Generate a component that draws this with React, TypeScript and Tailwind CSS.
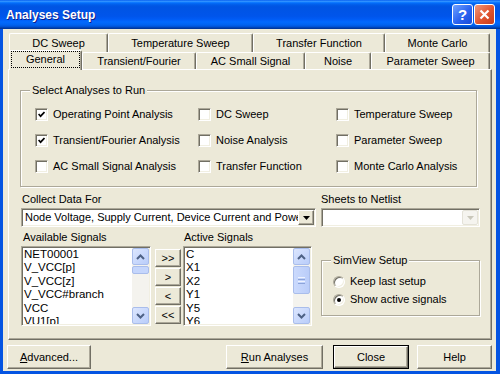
import React from 'react';

const raised =
  'border border-t-white border-l-white border-r-[#716F64] border-b-[#716F64] shadow-[inset_-1px_-1px_0_#ACA899]';
const sunken =
  'border border-t-[#ACA899] border-l-[#ACA899] border-r-white border-b-white shadow-[inset_1px_1px_0_#716F64,inset_-1px_-1px_0_#F1EFE2]';
const etched = 'border border-[#ACA899] shadow-[inset_1px_1px_0_#FFFFFF,1px_1px_0_#FFFFFF]';

function Check({ on }: { on?: boolean }) {
  return (
    <span className={`w-[13px] h-[13px] shrink-0 bg-white flex items-center justify-center ${sunken}`}>
      {on && (
        <svg width="7" height="7" viewBox="0 0 7 7">
          <path d="M0.6 3 L2.6 5.2 L6.5 1" fill="none" stroke="#000" strokeWidth="1.7" />
        </svg>
      )}
    </span>
  );
}

function Radio({ on }: { on?: boolean }) {
  return (
    <span className="w-[12px] h-[12px] shrink-0 rounded-full bg-white flex items-center justify-center border border-t-[#ACA899] border-l-[#ACA899] border-r-white border-b-white shadow-[inset_1px_1px_0_#716F64,inset_-1px_-1px_0_#F1EFE2]">
      {on && <span className="w-[4px] h-[4px] rounded-full bg-black" />}
    </span>
  );
}

function Tab({ label, className }: { label: string; className: string }) {
  return (
    <div
      className={`flex items-center justify-center bg-[#ECE9D8] border-t border-l border-t-white border-l-white border-r border-r-[#716F64] shadow-[inset_-1px_0_0_#ACA899] rounded-t-[2px] ${className}`}
    >
      {label}
    </div>
  );
}

function Arrow({ up }: { up?: boolean }) {
  return (
    <div className="w-[17px] h-[17px] shrink-0 rounded-[2px] border border-[#A9BDEB] bg-[linear-gradient(135deg,#DCE6FE,#B9CDFA)] flex items-center justify-center">
      <svg width="9" height="6" viewBox="0 0 9 6">
        <path
          d={up ? 'M1 5 L4.5 1.5 L8 5' : 'M1 1 L4.5 4.5 L8 1'}
          fill="none"
          stroke="#4D6185"
          strokeWidth="2"
        />
      </svg>
    </div>
  );
}

function ScrollBar({ thumb }: { thumb: 'small' | 'large' }) {
  return (
    <div className="w-[17px] h-full shrink-0 flex flex-col bg-[#F4F3EE]">
      <Arrow up />
      {thumb === 'small' ? (
        <div className="mt-[1px] h-[8px] rounded-[2px] border border-[#A9BDEB] bg-[#C5D6FC]" />
      ) : (
        <div className="mt-[1px] h-[28px] rounded-[2px] border border-[#A9BDEB] bg-[linear-gradient(90deg,#CBDAFD,#BACDF9)] flex flex-col items-center justify-center gap-[1px]">
          <span className="w-[7px] h-[1px] bg-[#EEF3FE]" />
          <span className="w-[7px] h-[1px] bg-[#8CA4DA]" />
          <span className="w-[7px] h-[1px] bg-[#EEF3FE]" />
          <span className="w-[7px] h-[1px] bg-[#8CA4DA]" />
        </div>
      )}
      <div className="flex-1" />
      <Arrow />
    </div>
  );
}

function ListBox({ items, className, thumb }: { items: string[]; className: string; thumb: 'small' | 'large' }) {
  return (
    <div className={`h-[80px] bg-white p-[1px] flex ${sunken} ${className}`}>
      <div className="flex-1 overflow-hidden pl-[1px] text-[11.5px] leading-[13.4px]">
        {items.map(it => (
          <div key={it} className="whitespace-nowrap">
            {it}
          </div>
        ))}
      </div>
      <ScrollBar thumb={thumb} />
    </div>
  );
}

function MoveButton({ label }: { label: string }) {
  return (
    <div className={`h-[18px] w-[26px] flex items-center justify-center bg-[#ECE9D8] ${raised}`}>{label}</div>
  );
}

export default function App() {
  return (
    <div className="w-[500px] h-[374px] flex flex-col bg-[#0454E2] font-['Liberation_Sans',Arial,sans-serif] text-[11px] text-black select-none overflow-hidden">
      {/* title bar */}
      <div className="h-[29px] shrink-0 flex items-center pl-[6px] pr-[5px] bg-[linear-gradient(180deg,#0058EE_0%,#3593FF_4%,#288EFF_6%,#127DFF_8%,#036FFC_10%,#0262EE_14%,#0057E5_20%,#0054E3_24%,#0055EB_56%,#005BF5_66%,#026AFE_76%,#0062EF_86%,#0052D6_92%,#0040AB_96%,#003092_100%)]">
        <span className="text-white font-bold text-[12px] [text-shadow:1px_1px_0_#0F1E8A]">Analyses Setup</span>
        <div className="ml-auto flex gap-[1px] mb-[1px]">
          <div className="w-[21px] h-[21px] rounded-[3px] border border-white bg-[linear-gradient(135deg,#6FA2FF,#2A63F0_55%,#1A4BD8)] flex items-center justify-center text-white font-bold text-[15px] leading-none">
            ?
          </div>
          <div className="w-[21px] h-[21px] rounded-[3px] border border-white bg-[linear-gradient(135deg,#F0987A,#E0542E_55%,#C83C1C)] flex items-center justify-center">
            <svg width="11" height="11" viewBox="0 0 11 11">
              <path d="M1.5 1.5 L9.5 9.5 M9.5 1.5 L1.5 9.5" stroke="#fff" strokeWidth="2.2" />
            </svg>
          </div>
        </div>
      </div>

      {/* client area */}
      <div className="flex-1 ml-[3px] mr-[4px] mb-[3px] bg-[#ECE9D8] flex flex-col pt-[4px]">
        {/* tabs back row */}
        <div className="flex ml-[6px] h-[19px]">
          <Tab label="DC Sweep" className="w-[99px]" />
          <Tab label="Temperature Sweep" className="w-[145px]" />
          <Tab label="Transfer Function" className="w-[132px]" />
          <Tab label="Monte Carlo" className="w-[105px]" />
        </div>
        {/* tabs front row */}
        <div className="flex items-end ml-[6px] h-[17px]">
          <div className="relative z-10 -mb-[1px] w-[73px] h-[20px] bg-[#ECE9D8] border-t border-l border-t-white border-l-white border-r border-r-[#716F64] shadow-[inset_-1px_0_0_#ACA899] rounded-t-[2px] flex flex-col px-[1px]">
            <div className="h-[17px] border border-dotted border-black flex items-center justify-center">General</div>
          </div>
          <Tab label="Transient/Fourier" className="w-[114px] h-[17px]" />
          <Tab label="AC Small Signal" className="w-[109px] h-[17px]" />
          <Tab label="Noise" className="w-[66px] h-[17px]" />
          <Tab label="Parameter Sweep" className="w-[119px] h-[17px]" />
        </div>

        {/* tab panel */}
        <div className="ml-[5px] w-[484px] h-[271px] shrink-0 flex flex-col border border-t-white border-l-white border-r-[#716F64] border-b-[#716F64] shadow-[inset_-1px_-1px_0_#ACA899]">
          {/* Select Analyses to Run */}
          <div className={`relative ml-[11px] mt-[20px] w-[457px] h-[97px] shrink-0 ${etched}`}>
            <span className="absolute left-[9px] -top-[7px] px-[2px] bg-[#ECE9D8] leading-[13px]">
              Select Analyses to Run
            </span>
            <div className="grid grid-cols-[163px_138px_1fr] gap-y-[13px] pt-[17px] pl-[14px]">
              <label className="flex items-center h-[13px] gap-[5px]">
                <Check on />
                Operating Point Analysis
              </label>
              <label className="flex items-center h-[13px] gap-[5px]">
                <Check />
                DC Sweep
              </label>
              <label className="flex items-center h-[13px] gap-[5px]">
                <Check />
                Temperature Sweep
              </label>
              <label className="flex items-center h-[13px] gap-[5px]">
                <Check on />
                Transient/Fourier Analysis
              </label>
              <label className="flex items-center h-[13px] gap-[5px]">
                <Check />
                Noise Analysis
              </label>
              <label className="flex items-center h-[13px] gap-[5px]">
                <Check />
                Parameter Sweep
              </label>
              <label className="flex items-center h-[13px] gap-[5px]">
                <Check />
                AC Small Signal Analysis
              </label>
              <label className="flex items-center h-[13px] gap-[5px]">
                <Check />
                Transfer Function
              </label>
              <label className="flex items-center h-[13px] gap-[5px]">
                <Check />
                Monte Carlo Analysis
              </label>
            </div>
          </div>

          {/* Collect data / sheets */}
          <div className="flex mt-[6px] ml-[12px]">
            <div className="w-[295px] flex flex-col">
              <span className="leading-[13px] pl-[1px]">Collect Data For</span>
              <div className={`mt-[2px] h-[19px] bg-white p-[1px] flex ${sunken}`}>
                <div className="flex-1 overflow-hidden whitespace-nowrap pl-[2px] leading-[15px]">
                  Node Voltage, Supply Current, Device Current and Power
                </div>
                <div className={`w-[16px] h-[15px] bg-[#ECE9D8] flex items-center justify-center ${raised}`}>
                  <svg width="7" height="4" viewBox="0 0 7 4">
                    <path d="M0 0 H7 L3.5 4 Z" fill="#000" />
                  </svg>
                </div>
              </div>
            </div>
            <div className="ml-[5px] w-[159px] flex flex-col">
              <span className="leading-[13px]">Sheets to Netlist</span>
              <div className={`mt-[2px] h-[19px] bg-white p-[1px] flex ${sunken}`}>
                <div className="flex-1" />
                <div className="w-[16px] h-[15px] rounded-[2px] border border-[#E4E2D8] bg-[#F5F4EF] flex items-center justify-center">
                  <svg width="7" height="4" viewBox="0 0 7 4">
                    <path d="M0 0 H7 L3.5 4 Z" fill="#C9C7BA" />
                  </svg>
                </div>
              </div>
            </div>
          </div>

          {/* signals */}
          <div className="flex mt-[4px] ml-[12px]">
            <div className="w-[130px] flex flex-col">
              <span className="leading-[13px] pl-[2px]">Available Signals</span>
              <ListBox
                className="mt-[2px] w-[130px]"
                thumb="small"
                items={['NET00001', 'V_VCC[p]', 'V_VCC[z]', 'V_VCC#branch', 'VCC', 'VU1[p]']}
              />
            </div>
            <div className="ml-[4px] w-[26px] pt-[18px] flex flex-col gap-[1px]">
              <MoveButton label=">>" />
              <MoveButton label=">" />
              <MoveButton label="<" />
              <MoveButton label="<<" />
            </div>
            <div className="ml-[2px] w-[129px] flex flex-col">
              <span className="leading-[13px] pl-[1px]">Active Signals</span>
              <ListBox
                className="mt-[2px] w-[129px]"
                thumb="large"
                items={['C', 'X1', 'X2', 'Y1', 'Y5', 'Y6']}
              />
            </div>
            <div className="ml-[9px] w-[159px] pt-[29px]">
              <div className={`relative h-[56px] ${etched}`}>
                <span className="absolute left-[9px] -top-[7px] px-[2px] bg-[#ECE9D8] leading-[13px]">
                  SimView Setup
                </span>
                <div className="flex flex-col gap-[5px] pt-[14px] pl-[11px]">
                  <label className="flex items-center h-[13px] gap-[5px]">
                    <Radio />
                    Keep last setup
                  </label>
                  <label className="flex items-center h-[13px] gap-[5px]">
                    <Radio on />
                    Show active signals
                  </label>
                </div>
              </div>
            </div>
          </div>
        </div>

        {/* bottom buttons */}
        <div className="flex mt-[5px] ml-[4px] h-[24px]">
          <div className={`w-[84px] h-full flex items-center justify-center ${raised}`}>
            <span>
              <span className="underline">A</span>dvanced...
            </span>
          </div>
          <div className={`ml-[135px] w-[97px] h-full flex items-center justify-center ${raised}`}>
            <span>
              <span className="underline">R</span>un Analyses
            </span>
          </div>
          <div className="ml-[10px] w-[76px] h-full border border-black flex">
            <div className={`flex-1 flex items-center justify-center ${raised}`}>Close</div>
          </div>
          <div className={`ml-[8px] w-[75px] h-full flex items-center justify-center ${raised}`}>Help</div>
        </div>
      </div>
    </div>
  );
}
